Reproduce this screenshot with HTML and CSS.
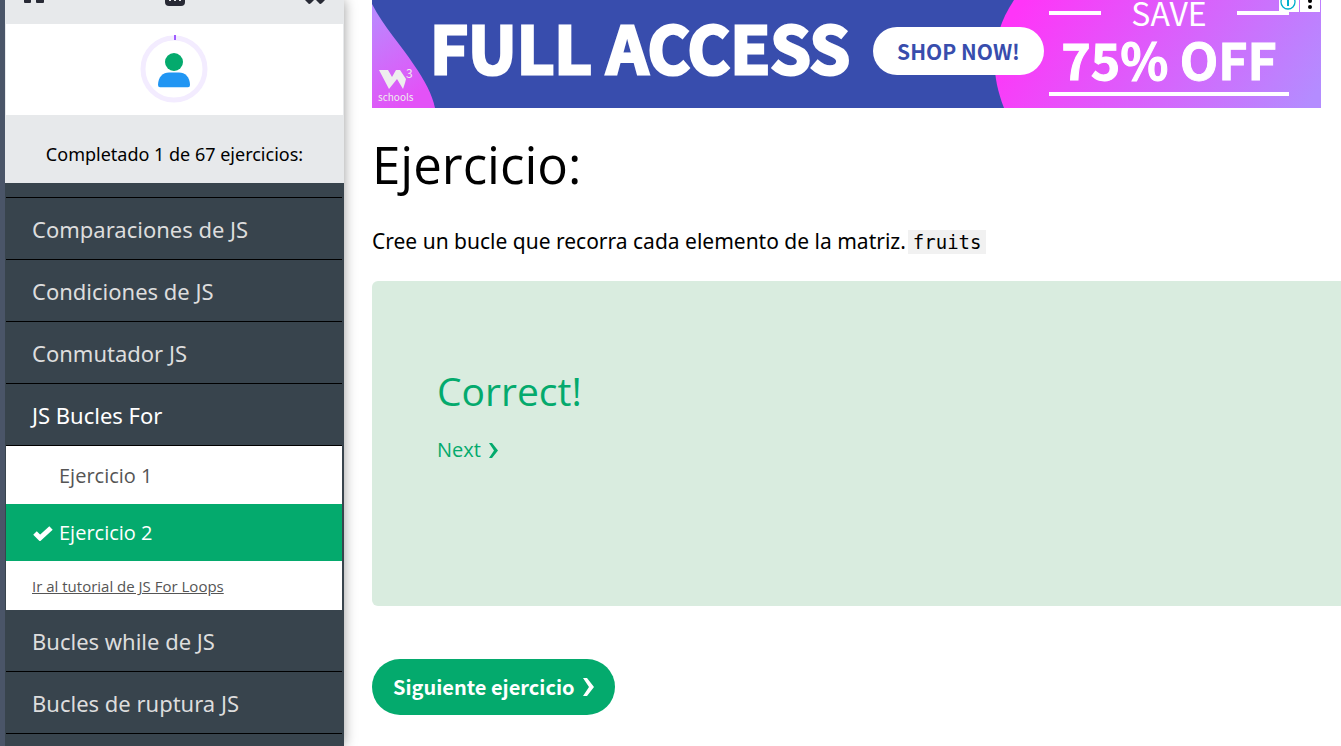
FILE: index.html
```
<!DOCTYPE html>
<html lang="es">
<head>
<meta charset="utf-8">
<meta name="viewport" content="width=device-width, initial-scale=1">
<title>Ejercicio: JS Bucles For</title>
<link rel="stylesheet" href="styles.css">
</head>
<body>
<div class="page">
  <aside class="sidebar">
    <div class="toolbar">
      <a href="#" aria-label="Inicio"><svg width="22" height="24" viewBox="0 0 22 24"><path d="M1 0h7v2q0 1-1 1H2q-1 0-1-1zM13 0h8v2q0 1-1 1h-6q-1 0-1-1z"/></svg></a>
      <a href="#" aria-label="Ejercicios"><svg width="22" height="24" viewBox="0 0 22 24"><path d="M1 0h20v2q0 4-4 4H5q-4 0-4-4z"/><path class="dots" d="M5 0h2v1H5zM10 0h2v1h-2zM15 0h2v1h-2z"/></svg></a>
      <a href="#" aria-label="Cerrar"><svg width="22" height="24" viewBox="0 0 22 24"><path d="M1 0h9L7 3Q5 5 4 3zM12 0h9l-3 3q-2 2-3 0z"/></svg></a>
    </div>
    <div class="profile">
      <svg width="68" height="68" viewBox="0 0 68 68" role="img" aria-label="Progreso">
        <circle cx="34" cy="34" r="31" fill="none" stroke="#f3ecff" stroke-width="5"/>
        <path d="M35 0v5" stroke="#9f5cff" stroke-width="2"/>
        <circle cx="34" cy="27" r="9" fill="#04aa6d"/>
        <path d="M18 50C18 42 23 37.500 29 37.500h10C45 37.500 50 42 50 50q0 2.300-2 2.300H20q-2 0-2-2.300z" fill="#2196f3"/>
      </svg>
    </div>
    <p class="progress">Completado 1 de 67 ejercicios:</p>
    <nav class="menu">
      <div class="menu-edge"></div>
      <a class="menu-item" href="#">Comparaciones de JS</a>
      <a class="menu-item" href="#">Condiciones de JS</a>
      <a class="menu-item" href="#">Conmutador JS</a>
      <a class="menu-item open" href="#">JS Bucles For</a>
      <div class="submenu">
        <a class="exercise" href="#">Ejercicio 1</a>
        <a class="exercise current" href="#"><svg class="check" width="20" height="16" viewBox="0 0 20 16"><path d="M2 8l5 5L18 3" fill="none" stroke="#fff" stroke-width="5"/></svg>Ejercicio 2</a>
        <a class="tutorial" href="#">Ir al tutorial de JS For Loops</a>
      </div>
      <a class="menu-item" href="#">Bucles while de JS</a>
      <a class="menu-item" href="#">Bucles de ruptura JS</a>
    </nav>
  </aside>
  <main class="content">
    <section class="banner">
      <svg class="art-left" width="64" height="108" viewBox="0 0 64 108">
        <defs><linearGradient id="gl" x1="0" y1="0" x2=".4" y2="1"><stop offset="0" stop-color="#b78dff"/><stop offset="1" stop-color="#e352f7"/></linearGradient></defs>
        <path d="M0 4C12 27 29 45 42 65C53 81 60 94 63 108H0z" fill="url(#gl)"/>
      </svg>
      <svg class="art-right" width="331" height="108" viewBox="0 0 331 108">
        <defs><linearGradient id="gr" gradientUnits="userSpaceOnUse" x1="40" y1="-10" x2="290" y2="150"><stop offset="0" stop-color="#ff35f8"/><stop offset="1" stop-color="#b48cff"/></linearGradient></defs>
        <path d="M24 0C0 36 0 72 14 108H331V0z" fill="url(#gr)"/>
      </svg>
      <div class="brand">
        <svg width="28" height="22" viewBox="0 0 28 22"><path d="M1 2h9l4 7 4-7h4l6 9-1 4-2 6-6-10-8 10z" fill="#eee"/></svg>
        <sup>3</sup>
        <span>schools</span>
      </div>
      <strong class="headline">FULL ACCESS</strong>
      <button class="shop">SHOP NOW!</button>
      <div class="offer">
        <div class="save">SAVE</div>
        <div class="percent">75% OFF</div>
      </div>
      <div class="ad-tools">
        <button aria-label="Información"><svg width="20" height="12" viewBox="0 0 20 12"><circle cx="9" cy="2" r="7" fill="none" stroke="#00aecd" stroke-width="1.3"/><path d="M9 0v6" stroke="#00aecd" stroke-width="2"/></svg></button>
        <button aria-label="Opciones"><svg width="20" height="12" viewBox="0 0 20 12"><circle cx="10" cy="1" r="2"/><circle cx="10" cy="7" r="2"/></svg></button>
      </div>
    </section>
    <h1>Ejercicio:</h1>
    <p class="task">Cree un bucle que recorra cada elemento de la matriz.<code>fruits</code></p>
    <section class="result">
      <h2>Correct!</h2>
      <a href="#">Next <svg width="9" height="15" viewBox="0 0 9 15"><path d="M0 0h3l6 7.500-6 7.500H0l5-7.500z"/></svg></a>
    </section>
    <button class="next">Siguiente ejercicio <svg width="11" height="18" viewBox="0 0 11 18"><path d="M0 0h4l7 9-7 9H0l6-9z"/></svg></button>
  </main>
</div>
</body>
</html>
```
FILE: styles.css
```
* { box-sizing: border-box; }

body {
  margin: 0;
  color: #000;
  background: #fff;
  font-family: "Open Sans", "Noto Sans", sans-serif;
}

a { color: inherit; text-decoration: none; }
button { border: 0; cursor: pointer; }
svg { display: block; flex: none; }

.page {
  display: flex;
  height: 100vh;
  overflow: hidden;
}

/* Sidebar */
.sidebar {
  flex: none;
  width: 344px;
  display: flex;
  flex-direction: column;
  border-left: 5px solid #4a5568;
  background: #e7e9eb;
  box-shadow: 0 0 12px rgba(0, 0, 0, .4);
}

.toolbar {
  display: flex;
  justify-content: space-between;
  height: 24px;
  padding: 0 18px;
  fill: #282a35;
}
.toolbar .dots { fill: #e7e9eb; }

.profile {
  display: flex;
  justify-content: center;
  height: 91px;
  margin: 0 1px;
  padding: 11px 2px 0 0;
  background: #fff;
}

.progress {
  height: 68px;
  margin: 0;
  padding-top: 7px;
  font-family: "Noto Sans", sans-serif;
  font-size: 18px;
  line-height: 64px;
  text-align: center;
}

.menu {
  flex: 1;
  padding: 0 2px 0 1px;
  background: #38444d;
  color: #ddd;
}
.menu-edge { height: 15px; border-bottom: 1px solid #000; }
.menu-item {
  display: block;
  height: 62px;
  padding-left: 26px;
  border-bottom: 1px solid #000;
  font-family: "Noto Sans", sans-serif;
  font-size: 22px;
  line-height: 62px;
}
.menu-item.open { color: #fff; }

.submenu { background: #fff; color: #555; }
.exercise {
  display: flex;
  align-items: center;
  height: 58px;
  padding-left: 53px;
  font-size: 20px;
}
.exercise.current {
  gap: 6px;
  height: 57px;
  padding-left: 27px;
  background: #04aa6d;
  color: #fff;
}
.tutorial {
  display: block;
  height: 49px;
  padding-left: 26px;
  font-size: 15px;
  line-height: 50px;
  text-decoration: underline;
}

/* Main column */
.content {
  flex: 1;
  min-width: 0;
  padding-left: 28px;
}

.banner {
  position: relative;
  display: flex;
  align-items: flex-start;
  height: 108px;
  margin-right: 20px;
  overflow: hidden;
  background: #384dad;
  color: #fff;
}
.art-left, .art-right { position: absolute; top: 0; }
.art-left { left: 0; }
.art-right { right: 0; }

.brand {
  position: relative;
  display: grid;
  grid-template-columns: 28px 8px;
  flex: none;
  width: 56px;
  padding: 68px 0 0 6px;
  color: #eee;
  font-family: "Noto Sans CJK SC", sans-serif;
}
.brand sup { font-size: 12px; line-height: 10px; }
.brand span {
  grid-column: 1 / 3;
  font-size: 10px;
  line-height: 14px;
}

.headline {
  position: relative;
  flex: none;
  width: 445px;
  padding: 10px 0 0 2px;
  font: bold 65px/72px "Noto Sans CJK SC", sans-serif;
  white-space: nowrap;
  -webkit-text-stroke: 3px #fff;
}

.shop {
  position: relative;
  flex: none;
  width: 171px;
  height: 48px;
  margin-top: 27px;
  border-radius: 24px;
  background: #fff;
  color: #384dad;
  font: bold 21px/46px "Noto Sans CJK SC", sans-serif;
}

.offer {
  position: relative;
  flex: none;
  width: 240px;
  height: 96px;
  margin: 0 32px 0 auto;
  border-bottom: 4px solid #fff;
  text-align: center;
  font-family: "Noto Sans CJK SC", sans-serif;
}
.save {
  display: flex;
  justify-content: space-between;
  align-items: center;
  height: 25px;
  font-size: 32px;
  line-height: 25px;
}
.save::before, .save::after {
  content: "";
  width: 52px;
  height: 4px;
  background: #fff;
}
.percent {
  font-size: 50px;
  font-weight: bold;
  line-height: 67px;
  white-space: nowrap;
  -webkit-text-stroke: 1px #fff;
}

.ad-tools {
  position: absolute;
  top: 0;
  right: 1px;
  display: flex;
  gap: 1px;
}
.ad-tools button { padding: 0; background: #fff; }

h1 {
  margin: 20px 0 0;
  font-size: 51px;
  font-weight: 400;
  line-height: 72px;
}

.task {
  margin: 26px 0 23px;
  font-family: "Noto Sans", sans-serif;
  font-size: 21px;
  line-height: 31px;
}
.task code {
  margin-left: 2px;
  padding: 1px 5px;
  background: #f1f1f1;
  font-family: "DejaVu Sans Mono", monospace;
  font-size: 19px;
}

.result {
  height: 325px;
  padding: 80px 65px;
  border-radius: 6px 0 0 6px;
  background: #d9ecdf;
  color: #04aa6d;
}
.result h2 {
  margin: 0 0 16px;
  font-size: 39px;
  font-weight: 400;
  line-height: 60px;
}
.result a {
  display: inline-flex;
  align-items: center;
  gap: 8px;
  font-size: 20px;
  line-height: 26px;
  fill: currentColor;
}

.next {
  display: flex;
  align-items: center;
  gap: 8px;
  height: 56px;
  margin-top: 53px;
  padding: 0 21px;
  border-radius: 28px;
  background: #04aa6d;
  color: #fff;
  fill: #fff;
  font: bold 20px/56px "Noto Sans CJK SC", sans-serif;
}
```
